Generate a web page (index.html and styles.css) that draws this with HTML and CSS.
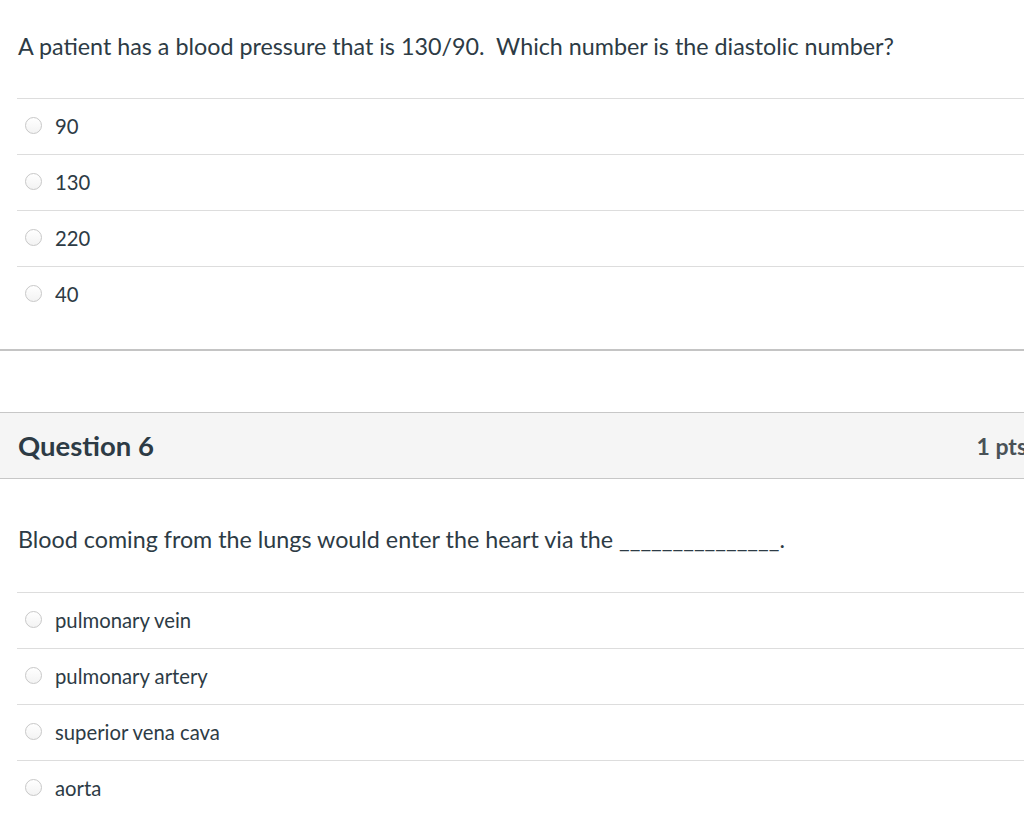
FILE: index.html
```html
<!DOCTYPE html>
<html>
<head>
<meta charset="utf-8">
<link rel="stylesheet" href="styles.css">
</head>
<body>
<div class="page">
  <section class="question q5">
    <div class="qtext">A patient has a blood pressure that is 130/90.&nbsp; Which number is the diastolic number?</div>
    <ul class="answers">
      <li class="answer"><span class="radio"></span><span class="label">90</span></li>
      <li class="answer"><span class="radio"></span><span class="label">130</span></li>
      <li class="answer"><span class="radio"></span><span class="label">220</span></li>
      <li class="answer"><span class="radio"></span><span class="label">40</span></li>
    </ul>
  </section>
  <section class="question q6">
    <header class="qheader">
      <h2 class="qname">Question 6</h2>
      <span class="qpoints">1 pts</span>
    </header>
    <div class="qtext">Blood coming from the lungs would enter the heart via the _______________.</div>
    <ul class="answers">
      <li class="answer"><span class="radio"></span><span class="label">pulmonary vein</span></li>
      <li class="answer"><span class="radio"></span><span class="label">pulmonary artery</span></li>
      <li class="answer"><span class="radio"></span><span class="label">superior vena cava</span></li>
      <li class="answer"><span class="radio"></span><span class="label">aorta</span></li>
    </ul>
  </section>
</div>
</body>
</html>
```

FILE: styles.css
```css
html, body {
  margin: 0;
  padding: 0;
  background: #ffffff;
  overflow: hidden;
}
body {
  font-family: Lato, "Liberation Sans", sans-serif;
  color: #2d3b45;
}
.page {
  width: 1045px;
}
.question {
  display: flex;
  flex-direction: column;
}
.q5 {
  padding-top: 32px;
  padding-bottom: 27px;
  border-bottom: 2px solid #c4c4c4;
}
.qtext {
  margin-left: 18px;
  font-size: 23.3px;
  line-height: 28px;
  white-space: nowrap;
}
.answers {
  list-style: none;
  margin: 38px 0 0 17px;
  padding: 0;
}
.answer {
  box-sizing: border-box;
  display: flex;
  align-items: center;
  height: 56px;
  padding-bottom: 2px;
  border-top: 1px solid #dddddd;
}
.radio {
  box-sizing: border-box;
  width: 17px;
  height: 17px;
  margin-left: 8px;
  margin-right: 13px;
  border: 1px solid #c8c8c8;
  border-radius: 50%;
  background: linear-gradient(#ffffff, #f3f3f3);
}
.label {
  font-size: 20.3px;
  line-height: 24px;
}
.q6 {
  margin-top: 61px;
}
.qheader {
  display: flex;
  align-items: center;
  justify-content: space-between;
  height: 65px;
  padding: 0 18px;
  background: #f5f5f5;
  border-top: 1px solid #c7c7c7;
  border-bottom: 1px solid #c7c7c7;
}
.qname {
  margin: 0;
  font-size: 27.5px;
  font-weight: 700;
  line-height: 32px;
}
.qpoints {
  font-size: 23px;
  font-weight: 700;
  color: #4a5257;
}
.q6 .qtext {
  margin-top: 46px;
}
.q6 .answers {
  margin-top: 39px;
}
```
